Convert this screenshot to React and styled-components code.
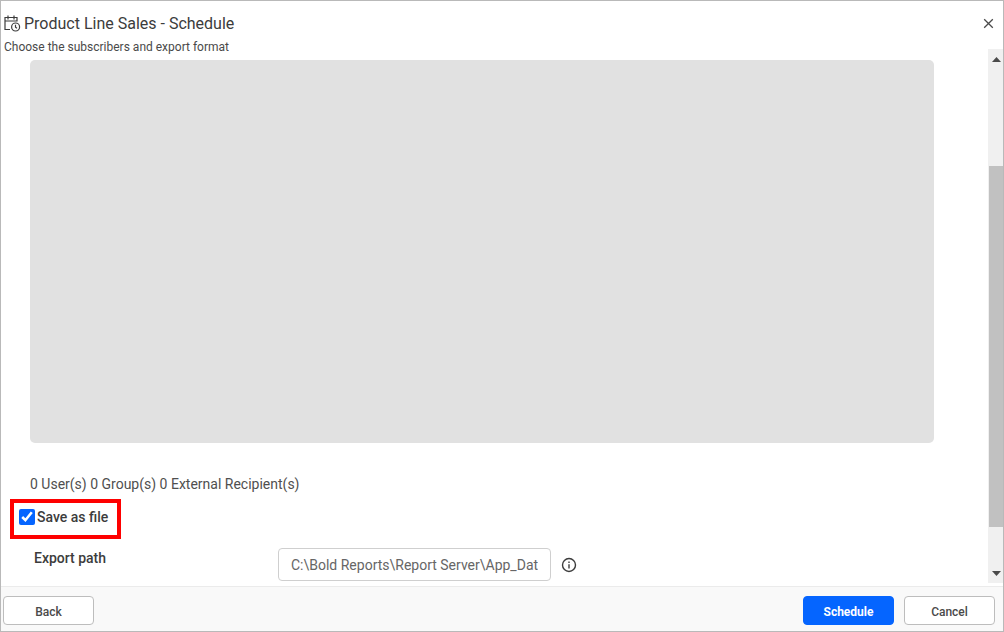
import React, { useState } from 'react'
import styled, { createGlobalStyle } from 'styled-components'

const GlobalStyle = createGlobalStyle`
  * {
    box-sizing: border-box;
  }

  body {
    margin: 0;
    background: #fff;
    color: #3c3c3c;
    font-family: Roboto, "Liberation Sans", sans-serif;
    font-size: 14px;
  }

  button, input {
    font-family: inherit;
  }
`

const Dialog = styled.div`
  display: flex;
  flex-direction: column;
  height: 100vh;
  border: 1px solid #b9b9b9;
`

const Header = styled.header`
  display: flex;
  justify-content: space-between;
  align-items: flex-start;
  height: 48px;
  padding: 13px 8px 0 3px;
`

const Title = styled.h1`
  display: flex;
  align-items: center;
  gap: 3px;
  margin: 0;
  font-size: 16px;
  font-weight: 400;
  line-height: 20px;
`

const Subtitle = styled.p`
  margin: 5px 0 0;
  font-size: 12px;
  line-height: 16px;
  color: #4a4a4a;
`

const CloseButton = styled.button`
  display: flex;
  margin-top: 3px;
  padding: 0;
  border: 0;
  background: none;
  color: #4a4a4a;
`

const Body = styled.div`
  display: flex;
  flex: 1;
  min-height: 0;
`

const Content = styled.main`
  display: flex;
  flex: 1;
  flex-direction: column;
  min-width: 0;
  padding: 11px 54px 5px 9px;
`

const Subscribers = styled.div`
  flex: 1;
  margin-left: 20px;
  border-radius: 5px;
  background: #e1e1e1;
`

const Summary = styled.p`
  margin: 31px 0 5px 20px;
  line-height: 20px;
  color: #4f4f4f;
`

const SaveOption = styled.label`
  display: flex;
  align-items: center;
  align-self: flex-start;
  gap: 2px;
  height: 40px;
  padding: 0 9px 4px 5px;
  border: 4px solid #fe0000;
  font-weight: 500;
`

const Checkbox = styled.input`
  width: 16px;
  height: 16px;
  margin: 0;
  accent-color: #0565ff;
`

const PathRow = styled.div`
  display: flex;
  align-items: center;
  margin-top: 9px;
  padding-left: 24px;
`

const PathLabel = styled.label`
  align-self: flex-start;
  width: 244px;
  font-weight: 500;
  line-height: 20px;
`

const PathInput = styled.input`
  width: 273px;
  height: 33px;
  margin-right: 10px;
  padding: 0 12px;
  border: 1px solid #cfcfcf;
  border-radius: 4px;
  font-size: 14px;
  color: #666;
`

const InfoButton = styled.button`
  display: flex;
  padding: 0;
  border: 0;
  background: none;
  color: #3c3c3c;
`

const Scrollbar = styled.div`
  display: flex;
  flex-direction: column;
  width: 15px;
  margin-bottom: 3px;
  background: #f0f0f0;
`

const ScrollButton = styled.button`
  display: flex;
  align-items: center;
  justify-content: flex-end;
  height: 20px;
  padding: 0 2px 0 0;
  border: 0;
  background: none;
`

const Track = styled.div`
  display: flex;
  flex: 1;
  flex-direction: column;
  align-items: flex-end;
`

const Space = styled.div`
  flex: ${(props) => props.$size};
`

const Thumb = styled.div`
  flex: 361;
  width: 14px;
  background: #c1c1c1;
`

const Footer = styled.footer`
  display: flex;
  align-items: center;
  gap: 10px;
  height: 45px;
  padding: 3px 8px 0 2px;
  border-top: 1px solid #ebebeb;
  background: #f9f9f9;
`

const Button = styled.button`
  width: 91px;
  height: 29px;
  margin-right: ${(props) => (props.$first ? 'auto' : '0')};
  padding: 2px 0 0;
  border: 1px solid ${(props) => (props.$primary ? '#0565ff' : '#bdbdbd')};
  border-radius: 4px;
  background: ${(props) => (props.$primary ? '#0565ff' : '#fff')};
  color: ${(props) => (props.$primary ? '#fff' : '#4a4a4a')};
  font-size: 12px;
  font-weight: ${(props) => (props.$primary ? '700' : '500')};
`

const ScheduleIcon = () => (
  <svg width="17" height="18" viewBox="0 0 17 18" fill="none" stroke="currentColor" strokeWidth="1.2" aria-hidden="true">
    <path d="M6 14.5H1V2.5H13V6.5M1 6H13M4 .5V4.5M10 .5V4.5" />
    <circle cx="11.6" cy="12" r="4" />
    <path d="M11.5 9.8V12.3L13 13.3" />
  </svg>
)

const CloseIcon = () => (
  <svg width="13" height="13" viewBox="0 0 13 13" stroke="currentColor" strokeWidth="1.3" aria-hidden="true">
    <path d="M2.2 2.2L10.8 10.8M10.8 2.2L2.2 10.8" />
  </svg>
)

const InfoIcon = () => (
  <svg width="16" height="16" viewBox="0 0 16 16" fill="none" stroke="currentColor" strokeWidth="1.4" aria-hidden="true">
    <circle cx="8" cy="8" r="6.5" />
    <path d="M8 7.2V11.4M8 4.5V6" />
  </svg>
)

const Arrow = ({ down }) => (
  <svg width="9" height="5" viewBox="0 0 9 5" fill="#4a4a4a" aria-hidden="true">
    <path d={down ? 'M0 0H9L4.5 5Z' : 'M0 5H9L4.5 0Z'} />
  </svg>
)

const App = () => {
  const [saveAsFile, setSaveAsFile] = useState(true)
  const [path, setPath] = useState('C:\\Bold Reports\\Report Server\\App_Data')

  return (
    <Dialog role="dialog" aria-labelledby="title">
      <GlobalStyle />
      <Header>
        <div>
          <Title id="title"><ScheduleIcon />Product Line Sales - Schedule</Title>
          <Subtitle>Choose the subscribers and export format</Subtitle>
        </div>
        <CloseButton type="button" aria-label="Close"><CloseIcon /></CloseButton>
      </Header>
      <Body>
        <Content>
          <Subscribers />
          <Summary>0 User(s) 0 Group(s) 0 External Recipient(s)</Summary>
          <SaveOption>
            <Checkbox
              type="checkbox"
              checked={saveAsFile}
              onChange={(e) => setSaveAsFile(e.target.checked)}
            />
            Save as file
          </SaveOption>
          <PathRow>
            <PathLabel htmlFor="export-path">Export path</PathLabel>
            <PathInput id="export-path" type="text" value={path} onChange={(e) => setPath(e.target.value)} />
            <InfoButton type="button" aria-label="Export path information"><InfoIcon /></InfoButton>
          </PathRow>
        </Content>
        <Scrollbar>
          <ScrollButton type="button" aria-label="Scroll up"><Arrow /></ScrollButton>
          <Track>
            <Space $size={97} />
            <Thumb />
            <Space $size={36} />
          </Track>
          <ScrollButton type="button" aria-label="Scroll down"><Arrow down /></ScrollButton>
        </Scrollbar>
      </Body>
      <Footer>
        <Button type="button" $first>Back</Button>
        <Button type="button" $primary>Schedule</Button>
        <Button type="button">Cancel</Button>
      </Footer>
    </Dialog>
  )
}

export default App
